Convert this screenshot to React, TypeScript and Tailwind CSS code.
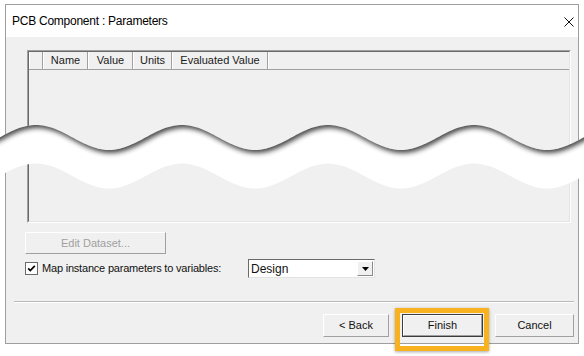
import React from "react";

const FONT = { fontFamily: '"Liberation Sans", Arial, sans-serif' };

// wavy "cut" band drawn over the middle of the dialog
function WaveCut() {
  const period = 146;
  const x0 = 36;
  const amp = 12.5;
  const mid = 137.5;
  const gap = 38.5;
  const edge = (x: number) => mid - amp * Math.cos((2 * Math.PI * (x - x0)) / period);

  const xs: number[] = [];
  for (let x = -6; x <= 590; x += 2) xs.push(x);

  const topPts = xs.map((x) => `${x},${edge(x).toFixed(2)}`);
  const botPts = xs
    .slice()
    .reverse()
    .map((x) => `${x},${(edge(x) + gap).toFixed(2)}`);

  const band = `M ${topPts.join(" L ")} L ${botPts.join(" L ")} Z`;
  const upper = `M -6,-20 L 590,-20 L ${xs
    .slice()
    .reverse()
    .map((x) => `${x},${edge(x).toFixed(2)}`)
    .join(" L ")} Z`;

  return (
    <svg
      className="pointer-events-none absolute left-0 top-0"
      width={584}
      height={356}
      viewBox="0 0 584 356"
    >
      <defs>
        <clipPath id="bandClip">
          <path d={band} />
        </clipPath>
        <filter id="soft" x="-10%" y="-10%" width="120%" height="140%">
          <feGaussianBlur stdDeviation="2.4" />
        </filter>
      </defs>
      <path d={band} fill="#ffffff" />
      <g clipPath="url(#bandClip)">
        <path d={upper} fill="#3c3c3c" opacity={0.95} filter="url(#soft)" transform="translate(1.5,3)" />
      </g>
    </svg>
  );
}

function HeaderCell({ w, children }: { w: number; children?: React.ReactNode }) {
  return (
    <div
      className="flex h-full shrink-0 items-center justify-center border-l border-r border-l-white border-r-[#a0a0a0] text-[11px] text-[#1a1a1a]"
      style={{ width: w }}
    >
      {children}
    </div>
  );
}

function WinButton({
  w,
  children,
  disabled,
  isDefault,
}: {
  w: number;
  children: React.ReactNode;
  disabled?: boolean;
  isDefault?: boolean;
}) {
  return (
    <div
      className={
        "flex h-full shrink-0 " +
        (isDefault ? "border border-[#3c3c3c]" : "")
      }
      style={{ width: w }}
    >
      <div
        className={
          "flex flex-1 items-center justify-center border border-t-white border-l-white border-b-[#a0a0a0] border-r-[#a0a0a0] bg-[#f0f0f0] text-[11px] " +
          (disabled ? "text-[#a0a0a0]" : "text-[#111]")
        }
      >
        {children}
      </div>
    </div>
  );
}

export default function App() {
  return (
    <div className="relative h-[356px] w-[584px] overflow-hidden bg-white" style={FONT}>
      <div className="ml-[5px] mt-[4px] flex h-[340px] w-[574px] flex-col border border-[#9e9e9e]">
        {/* title bar */}
        <div className="flex h-[32px] shrink-0 items-center justify-between bg-white pl-[6px] pr-[3px]">
          <span className="text-[12px] tracking-[-0.25px] text-black">PCB Component : Parameters</span>
          <svg width="10" height="10" viewBox="0 0 10 10" className="mr-[1px] mt-[1px]">
            <path d="M0.5 0.5 L9.5 9.5 M9.5 0.5 L0.5 9.5" stroke="#111" strokeWidth="1" />
          </svg>
        </div>

        {/* body */}
        <div className="flex flex-1 flex-col bg-[#f0f0f0] pt-[13px]">
          {/* parameter list */}
          <div className="ml-[21px] h-[173px] w-[544px] border border-t-[#a0a0a0] border-l-[#a0a0a0] border-b-white border-r-white">
            <div className="flex h-full w-full flex-col border border-t-[#6a6a6a] border-l-[#6a6a6a] border-b-[#e3e3e3] border-r-[#e3e3e3]">
              <div className="flex h-[18px] shrink-0 border-b border-[#a0a0a0]">
                <HeaderCell w={14} />
                <HeaderCell w={45}>Name</HeaderCell>
                <HeaderCell w={45}>Value</HeaderCell>
                <HeaderCell w={39}>Units</HeaderCell>
                <HeaderCell w={96}>Evaluated Value</HeaderCell>
                <div className="h-full flex-1 border-l border-white" />
              </div>
              <div className="flex-1" />
            </div>
          </div>

          {/* edit dataset */}
          <div className="ml-[19px] mt-[9px] h-[22px]">
            <WinButton w={141} disabled>
              Edit Dataset...
            </WinButton>
          </div>

          {/* map instance row */}
          <div className="mt-[5px] flex h-[19px] items-center">
            <div className="ml-[19px] flex h-[13px] w-[13px] items-center justify-center border border-[#6a6a6a] bg-white">
              <svg width="9" height="9" viewBox="0 0 9 9">
                <path d="M1.2 4.4 L3.3 6.6 L7.8 1.8" fill="none" stroke="#000" strokeWidth="1.7" />
              </svg>
            </div>
            <span className="ml-[4px] text-[11px] tracking-[-0.2px] text-[#111]">
              Map instance parameters to variables:
            </span>
            <div className="ml-auto mr-[203px] flex h-[19px] w-[127px] border border-t-[#6a6a6a] border-l-[#6a6a6a] border-b-[#e3e3e3] border-r-[#e3e3e3] bg-white">
              <span className="flex flex-1 items-center pl-[2px] text-[12px] text-[#111]">Design</span>
              <div className="my-[1px] mr-[1px] flex w-[16px] items-center justify-center border border-t-white border-l-white border-b-[#8a8a8a] border-r-[#8a8a8a] bg-[#f0f0f0]">
                <svg width="7" height="4" viewBox="0 0 7 4">
                  <path d="M0 0 L7 0 L3.5 4 Z" fill="#000" />
                </svg>
              </div>
            </div>
          </div>

          {/* separator */}
          <div className="ml-[8px] mt-[23px] h-[2px] w-[560px] border-t border-b border-t-[#b9b9b9] border-b-white" />

          {/* wizard buttons */}
          <div className="mt-[11px] flex h-[23px] justify-end pr-[4px]">
            <WinButton w={66}>&lt; Back</WinButton>
            <div className="relative ml-[13px] h-full">
              <WinButton w={81} isDefault>
                Finish
              </WinButton>
              <div className="pointer-events-none absolute left-[-7px] top-[-6px] h-[43px] w-[94px] border-[5px] border-[#f9b21f] shadow-[0_1px_3px_rgba(0,0,0,0.35)]" />
            </div>
            <div className="ml-[12px] h-full">
              <WinButton w={79}>Cancel</WinButton>
            </div>
          </div>
        </div>
      </div>
      <WaveCut />
    </div>
  );
}
